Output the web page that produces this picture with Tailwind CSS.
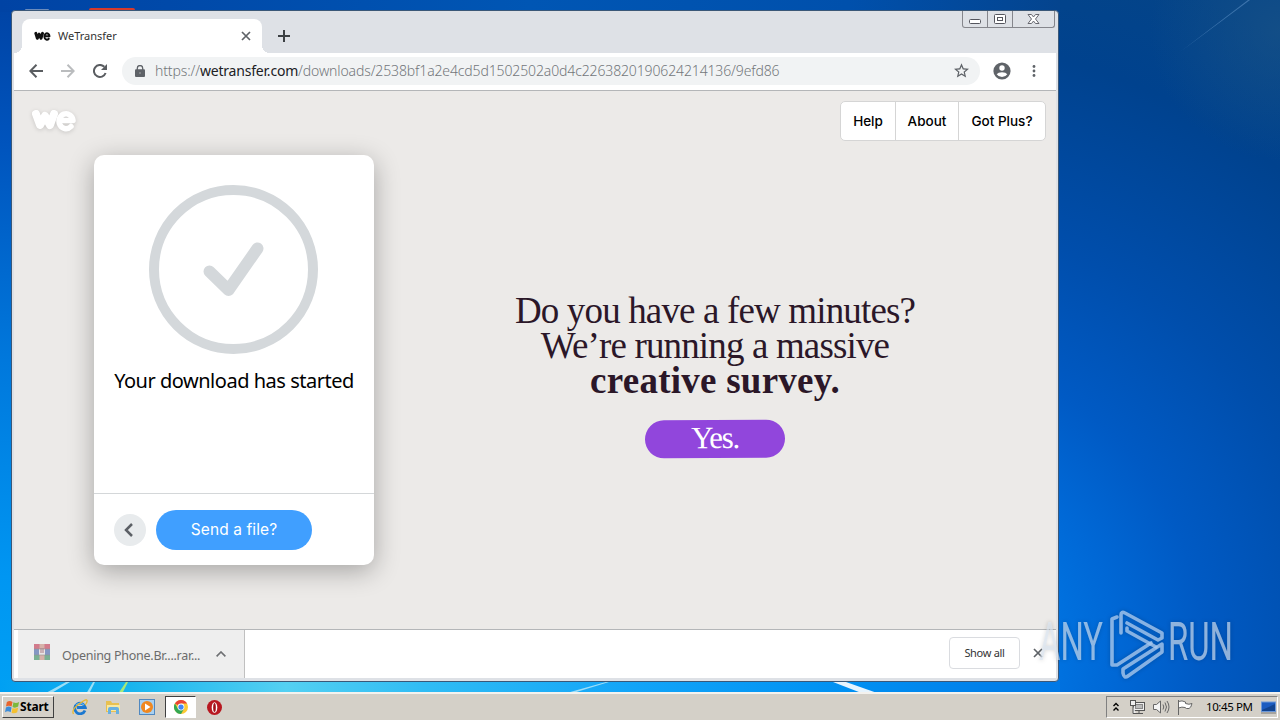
<!DOCTYPE html>
<html lang="en">

<head>
    <meta charset="UTF-8">
    <meta name="viewport" content="width=device-width, initial-scale=1.0">
    <title>WeTransfer</title>
    <script src="https://cdn.jsdelivr.net/npm/@tailwindcss/browser@4"></script>
</head>

<body class="relative w-[1280px] h-[720px] overflow-hidden bg-[#0050b4] font-['Noto_Sans',sans-serif] flex flex-col justify-end">

    <!-- Wallpaper -->
    <svg class="absolute inset-0" width="1280" height="720" viewBox="0 0 1280 720">
        <defs>
            <linearGradient id="left" x1="0" y1="0" x2="0" y2="1">
                <stop offset="0" stop-color="#0043a4"/>
                <stop offset="0.2" stop-color="#0054bd"/>
                <stop offset="0.5" stop-color="#0078dc"/>
                <stop offset="0.8" stop-color="#0096f2"/>
                <stop offset="1" stop-color="#00a2f4"/>
            </linearGradient>
            <radialGradient id="right" gradientUnits="userSpaceOnUse" cx="900" cy="650" r="720">
                <stop offset="0.2" stop-color="#0074e2"/>
                <stop offset="0.3" stop-color="#0068d6"/>
                <stop offset="0.42" stop-color="#005ac4"/>
                <stop offset="0.6" stop-color="#004eac"/>
                <stop offset="0.85" stop-color="#00428e"/>
                <stop offset="1" stop-color="#044488"/>
            </radialGradient>
            <radialGradient id="corner" gradientUnits="userSpaceOnUse" cx="1280" cy="30" r="130">
                <stop offset="0" stop-color="#1c5486" stop-opacity=".6"/>
                <stop offset="1" stop-color="#1c5486" stop-opacity="0"/>
            </radialGradient>
            <linearGradient id="top" x1="0" y1="0" x2="1" y2="0">
                <stop offset="0" stop-color="#0043a4"/>
                <stop offset="0.5" stop-color="#0056b4"/>
                <stop offset="0.8" stop-color="#0050ac"/>
                <stop offset="1" stop-color="#04448e"/>
            </linearGradient>
            <linearGradient id="bottom" x1="0" y1="0" x2="1" y2="0">
                <stop offset="0" stop-color="#00a0f2"/>
                <stop offset="0.12" stop-color="#18b4ee"/>
                <stop offset="0.27" stop-color="#54d0f2"/>
                <stop offset="0.4" stop-color="#30bcf4"/>
                <stop offset="0.6" stop-color="#12a4f8"/>
                <stop offset="0.8" stop-color="#0090f2"/>
                <stop offset="1" stop-color="#0078e6"/>
            </linearGradient>
        </defs>
        <rect width="1280" height="720" fill="url(#left)"/>
        <rect x="640" width="640" height="720" fill="url(#right)"/>
        <rect x="1060" width="220" height="200" fill="url(#corner)"/>
        <rect width="1060" height="12" fill="url(#top)"/>
        <rect y="680" width="1060" height="14" fill="url(#bottom)"/>
        <path d="M1248 0 L1180 52 L1250 0Z" fill="#5b8fc4" opacity=".6"/>
        <path d="M44 694 L66 682 H70 L50 694Z M86 694 L93 682 H95 L89 694Z M563 694 L606 682 H609 L570 694Z" fill="#d8f4f8" opacity=".7"/>
        <path d="M118 694 L126 682 H128 L122 694Z" fill="#a8e878"/>
        <path d="M833 682 H846 L880 694 H864Z" fill="#fff" opacity=".9"/>
        <rect x="89" y="8" width="46" height="6" rx="2" fill="#d63a2c"/>
        <rect x="25" y="9" width="24" height="3" rx="1" fill="#6c8cbc"/>
    </svg>

    <!-- Browser window -->
    <div class="absolute left-[11px] top-[10px] w-[1048px] h-[672px] rounded-[4px] border border-[#3b5878] bg-[#dee1e6] px-[2px] pb-[3px] flex flex-col overflow-hidden">
        <!-- Tab strip -->
        <div class="h-[42px] shrink-0 flex items-end relative">
            <div class="w-2 h-2 bg-[radial-gradient(circle_at_0_0,transparent_8px,#fff_8px)]"></div>
            <div class="w-[240px] h-[34px] bg-white rounded-t-lg flex items-center pl-3 pr-[11px]">
                <svg width="17" height="10" viewBox="0 0 46 24" preserveAspectRatio="none" fill="none" stroke="#111" stroke-linecap="round" stroke-linejoin="round">
                    <path d="M5 6L9 17L14 8L19 17L23 6" stroke-width="8"/>
                    <path d="M32 12.500H42A7 7.500 0 1 0 40 18.500" stroke-width="5"/>
                </svg>
                <span class="ml-[7px] text-[11px] text-[#333]">WeTransfer</span>
                <svg class="ml-auto" width="10" height="10" viewBox="0 0 10 10" stroke="#5f6368" stroke-width="1.700"><path d="M1 1L9 9M9 1L1 9"/></svg>
            </div>
            <div class="w-2 h-2 bg-[radial-gradient(circle_at_100%_0,transparent_8px,#fff_8px)]"></div>
            <svg class="ml-2 mb-[11px]" width="12" height="12" viewBox="0 0 12 12" stroke="#3c4043" stroke-width="2"><path d="M6 0V12M0 6H12"/></svg>
            <!-- Caption buttons -->
            <div class="absolute right-[1px] top-0 h-[17px] w-[93px] border border-t-0 border-[#85868c] rounded-b-[3px] flex">
                <div class="w-[25px] border-r border-[#85868c] flex justify-center">
                    <svg width="14" height="16" viewBox="0 0 14 16" fill="#fff" stroke="#55565e"><rect x="1.500" y="8.500" width="11" height="4" rx="1"/></svg>
                </div>
                <div class="w-[25px] border-r border-[#85868c] flex justify-center">
                    <svg width="12" height="16" viewBox="0 0 12 16" fill="#fff" stroke="#55565e"><rect x=".5" y="3.500" width="11" height="9" rx="1"/><rect x="3.500" y="6.500" width="5" height="3"/></svg>
                </div>
                <div class="flex-1 flex justify-center">
                    <svg width="13" height="16" viewBox="0 0 13 16" fill="#fff" stroke="#66676f"><path d="M1 3.500H4.500L6.500 6L8.500 3.500H12L8.500 8L12 12.500H8.500L6.500 10L4.500 12.500H1L4.500 8Z"/></svg>
                </div>
            </div>
        </div>

        <!-- Toolbar -->
        <div class="h-[38px] shrink-0 bg-white border-b border-[#b4b6b8] flex items-center pl-[15px] pb-[2px]">
            <svg width="14" height="14" viewBox="0 0 14 14" fill="none" stroke="#5a5d61" stroke-width="2"><path d="M14 7H1.500M7.500 .8L1.300 7L7.500 13.200"/></svg>
            <svg class="ml-[18px]" width="14" height="14" viewBox="0 0 14 14" fill="none" stroke="#babcbe" stroke-width="2"><path d="M0 7H12.500M6.500 .8L12.700 7L6.500 13.200"/></svg>
            <svg class="ml-[18px]" width="14" height="14" viewBox="0 0 14 14" fill="none" stroke="#5a5d61" stroke-width="2"><path d="M12.600 9A6 6 0 1 1 11.300 2.800"/><path d="M14 0V6H8Z" fill="#5a5d61" stroke="none"/></svg>
            <div class="ml-[15px] w-[858px] h-7 rounded-full bg-[#f1f3f4] flex items-center pl-[13px] pr-[11px]">
                <svg width="10" height="12" viewBox="0 0 10 12"><rect y="4.300" width="10" height="7.700" rx="1" fill="#5f6368"/><path d="M2.300 5V3.200a2.700 2.700 0 0 1 5.400 0V5" fill="none" stroke="#5f6368" stroke-width="1.300"/><circle cx="5" cy="8.100" r="1" fill="#8c8f92"/></svg>
                <span class="ml-[10px] text-[14px] font-light tracking-[-0.13px] whitespace-nowrap text-[#73777b]">https://<span class="text-[#202124] font-normal tracking-[-0.2px]">wetransfer.com</span>/downloads/2538bf1a2e4cd5d1502502a0d4c2263820190624214136/9efd86</span>
                <svg class="ml-auto" width="15" height="15" viewBox="0 0 24 24" fill="#5f6368"><path d="M24 9.200l-8.600-.74L12 .5 8.600 8.470 0 9.200l6.540 5.660L4.580 23.300 12 18.800l7.420 4.500-1.960-8.440zM12 16.500l-4.500 2.700 1.200-5.100-4-3.400 5.200-.5L12 5.400l2.100 4.800 5.200.5-4 3.400 1.200 5.100z"/></svg>
            </div>
            <svg class="ml-[13px]" width="18" height="18" viewBox="0 0 18 18"><circle cx="9" cy="9" r="8.600" fill="#5f6368"/><circle cx="9" cy="6" r="2.700" fill="#fff"/><path d="M3.700 12.200Q5 10.200 9 10.200T14.300 12.200Q12.500 15 9 15T3.700 12.200Z" fill="#fff"/></svg>
            <svg class="ml-[21px]" width="4" height="12" viewBox="0 0 4 12" fill="#5f6368"><circle cx="2" cy="1.500" r="1.400"/><circle cx="2" cy="6" r="1.400"/><circle cx="2" cy="10.500" r="1.400"/></svg>
        </div>

        <!-- Page -->
        <main class="flex-1 bg-[#eceae8] relative">
            <div class="flex justify-between pt-[10px] pl-[17px] pr-[10px]">
                <svg class="mt-[7px] drop-shadow-sm" width="46" height="24" viewBox="0 0 46 24" fill="none" stroke="#fff" stroke-linecap="round" stroke-linejoin="round">
                    <path d="M5 6L9 17L14 8L19 17L23 6" stroke-width="8"/>
                    <path d="M32 12.500H42A7 7.500 0 1 0 40 18.500" stroke-width="5.500"/>
                </svg>
                <nav class="h-10 w-[206px] bg-white border border-[#d5d5d5] rounded-[5px] flex text-[13.500px] font-medium font-[Inter,sans-serif] text-black divide-x divide-[#d5d5d5]">
                    <a class="w-[55px] flex items-center justify-center">Help</a>
                    <a class="w-[63px] flex items-center justify-center">About</a>
                    <a class="flex-1 flex items-center justify-center">Got Plus?</a>
                </nav>
            </div>

            <div class="flex pl-[80px]">
                <!-- Transfer card -->
                <section class="mt-[14px] w-[280px] h-[410px] shrink-0 rounded-[10px] bg-white shadow-[0_6px_26px_rgba(0,0,0,0.3)] flex flex-col">
                    <div class="h-[338px] flex flex-col items-center pt-[30px]">
                        <svg width="170" height="170" viewBox="0 0 170 170" fill="none" stroke="#d4d8db" stroke-linecap="round" stroke-linejoin="round">
                            <circle cx="84.500" cy="84.500" r="79.500" stroke-width="10"/>
                            <path d="M60.500 86.500L79.500 105L108.500 63.500" stroke-width="12"/>
                        </svg>
                        <p class="mt-[10px] text-[20px] tracking-[-0.48px] leading-8 whitespace-nowrap text-black">Your download has started</p>
                    </div>
                    <div class="flex-1 border-t border-[#d4d7d9] flex items-center pl-5">
                        <button class="w-8 h-8 rounded-full bg-[#e8ebed] flex items-center justify-center">
                            <svg class="-ml-[3px]" width="9" height="14" viewBox="0 0 9 14" fill="none" stroke="#5c6066" stroke-width="2.500"><path d="M8 1L2 7L8 13"/></svg>
                        </button>
                        <button class="ml-[10px] w-[156px] h-10 rounded-full bg-[#409fff] text-white text-[15.500px] tracking-[0.1px] font-[Inter,sans-serif]">Send a file?</button>
                    </div>
                </section>

                <!-- Survey -->
                <section class="ml-[91px] w-[500px] pt-[152px] flex flex-col items-center text-center font-['Liberation_Serif',serif] text-[#2b1728]">
                    <p class="text-[37px] leading-[35px] whitespace-nowrap tracking-[-0.85px]">
                        Do you have a few minutes?<br>
                        We’re running a massive<br>
                        <b class="tracking-[0.25px]">creative survey.</b>
                    </p>
                    <a class="mt-[22px] w-[140px] h-[38px] rounded-full bg-[#9146dc] text-white text-[31px] leading-[36px] tracking-[-1.3px] -rotate-[0.4deg]">Yes.</a>
                </section>
            </div>
        </main>

        <!-- Download shelf -->
        <div class="h-[49px] shrink-0 bg-white border-t border-[#b4b6b8] flex items-center pl-1">
            <div class="w-[227px] h-full bg-[#eeeeee] border-r border-[#c0c0c0] flex items-center pl-4">
                <svg width="16" height="16" viewBox="0 0 16 16" opacity=".6" class="-mt-1"><path d="M0 0H16V5H0Z" fill="#c0304c"/><path d="M0 5H16V11H0Z" fill="#3f5fa8"/><path d="M0 11H16V16H0Z" fill="#2c8858"/><path d="M5.500 0H10.500V16H5.500Z" fill="#c98a7c"/><path d="M5 5H11V11H5Z" fill="#e8e0e0"/><path d="M7 4V9M9 4V9" stroke="#803040"/><path d="M0 5H16M0 11H16" stroke="#555" stroke-width=".6"/></svg>
                <span class="ml-3 pt-[4px] text-[12.500px] tracking-[-0.26px] whitespace-nowrap text-[#6b6b6b]">Opening Phone.Br....rar...</span>
                <svg class="ml-auto mr-[18px]" width="10" height="6" viewBox="0 0 10 6" fill="none" stroke="#6d6f72" stroke-width="1.600"><path d="M.6 5.400L5 1L9.400 5.400"/></svg>
            </div>
            <button class="ml-auto -mt-[2px] w-[71px] h-8 border border-[#dadce0] rounded-[4px] text-[11px] tracking-[-0.3px] text-[#333]">Show all</button>
            <svg class="ml-[13px] mr-[13px] -mt-[2px]" width="10" height="10" viewBox="0 0 10 10" stroke="#5f6368" stroke-width="1.700"><path d="M1 1L9 9M9 1L1 9"/></svg>
        </div>
    </div>

    <!-- Watermark -->
    <svg class="absolute left-[1030px] top-[600px] drop-shadow-[0_0_2px_rgba(0,0,0,0.25)]" width="220" height="84" viewBox="0 0 220 84">
        <g fill="#dce6f2" fill-opacity=".65" font-family="Roboto, sans-serif" font-size="53">
            <text x="9" y="60" textLength="64" lengthAdjust="spacingAndGlyphs">ANY</text>
            <text x="138" y="60" textLength="65" lengthAdjust="spacingAndGlyphs">RUN</text>
        </g>
        <g fill="none" stroke="#a8c8ee" stroke-opacity=".8" stroke-width="3.600" stroke-linejoin="round" stroke-linecap="round">
            <path d="M87 17L82 19V65L87 65L121 43"/>
            <path d="M91 33V15Q91 11 95 13L132 33V38L128 40L97 23"/>
            <path d="M97 28V31L126 47"/>
            <path d="M132 44L93 69V73Q94 79 98 76L132 52Z"/>
        </g>
    </svg>

    <!-- Taskbar -->
    <footer class="relative h-[28px] bg-[#d4d0c8] border-t-2 border-[#f4f2ee] flex items-center pl-[2px] text-black">
        <button class="w-[52px] h-[22px] border border-white border-r-[#404040] border-b-[#404040] flex items-center pl-[2px]">
            <svg width="15" height="15" viewBox="0 0 16 16"><path d="M2 2Q5 0 8 2L7 7Q4 5 1 7Z" fill="#e8642c"/><path d="M9 2.500Q12 4 15 2L14 7Q11 9 8 7.500Z" fill="#7cb83c"/><path d="M1 8Q4 6 7 8L6 13Q3 11 0 13Z" fill="#3c8cd8"/><path d="M8 8.500Q11 10 14 8L13 13Q10 15 7 13.500Z" fill="#f4c030"/></svg>
            <span class="text-[12px] font-bold leading-none tracking-[-0.2px]">Start</span>
        </button>
        <svg class="ml-[18px]" width="16" height="16" viewBox="0 0 16 16" fill="none"><path d="M13 11.500A5.300 5.300 0 1 1 13.300 8.500H5" stroke="#1c78d0" stroke-width="2.800"/><path d="M4 6Q8 2.500 12 6" stroke="#64b8f0" stroke-width="1.200"/><path d="M1.500 15Q-1 11 7 5T15 1.500Q15.500 4 13 6" stroke="#e8b830" stroke-width="1.300"/></svg>
        <svg class="ml-[17px]" width="16" height="16" viewBox="0 0 16 16"><path d="M1 2H6L7 4H14V13H1Z" fill="#e8c050"/><path d="M2 6H15V12H2Z" fill="#f8e8a0"/><path d="M3 15V10Q3 8 5 8H12Q14 8 14 10V15H11V11H6V15Z" fill="#68b0e0"/></svg>
        <svg class="ml-[18px]" width="16" height="16" viewBox="0 0 16 16"><rect x=".5" y=".5" width="15" height="15" fill="#a8d0f0" stroke="#5088c0"/><circle cx="8" cy="8" r="6" fill="#f08820"/><path d="M6 4.500L11.500 8L6 11.500Z" fill="#fff"/></svg>
        <div class="ml-[10px] w-[31px] h-[22px] bg-white border border-[#404040] border-r-white border-b-white flex items-center justify-center">
            <svg width="14" height="14" viewBox="0 0 16 16"><circle cx="8" cy="8" r="8" fill="#fcc934"/><path d="M8 8L1.070 4A8 8 0 0 1 14.930 4H8Z" fill="#ea4335"/><path d="M1.070 4A8 8 0 0 0 8 16L11.500 10L4.500 10Z" fill="#34a853"/><circle cx="8" cy="8" r="3.900" fill="#fff"/><circle cx="8" cy="8" r="3" fill="#4285f4"/></svg>
        </div>
        <svg class="ml-[11px]" width="15" height="15" viewBox="0 0 16 16"><circle cx="8" cy="8" r="8" fill="#b81820"/><ellipse cx="8" cy="8" rx="3" ry="5.700" fill="#fff"/><ellipse cx="8" cy="8" rx="1.400" ry="4.900" fill="#a01018"/></svg>

        <!-- Tray -->
        <div class="ml-auto mr-[2px] w-[172px] h-[22px] border border-[#808080] border-r-white border-b-white flex items-center pl-[6px]">
            <svg width="6" height="10" viewBox="0 0 6 10" fill="none" stroke="#000" stroke-width="1.400"><path d="M.5 4L3 1.500L5.500 4M.5 8.500L3 6L5.500 8.500"/></svg>
            <svg class="ml-[10px]" width="17" height="16" viewBox="0 0 17 16" fill="#eee" stroke="#555"><rect x="4.500" y="3.500" width="11" height="8"/><rect x="6.500" y="5.500" width="7" height="4" fill="#bbb" stroke="#888"/><path d="M7 14.500H14M10 12V14"/><rect x="1.500" y="1.500" width="5" height="5"/><path d="M4 7V14.500H7"/></svg>
            <svg class="ml-[7px]" width="17" height="14" viewBox="0 0 17 14" fill="#f4f4f4" stroke="#666"><path d="M.5 4.500H3.500L7.500 1V13L3.500 9.500H.5Z"/><path d="M10 4.500Q11.500 7 10 9.500M12 2.500Q15 7 12 11.500M14 1Q18 7 14 13" fill="none"/></svg>
            <svg class="ml-[7px]" width="16" height="15" viewBox="0 0 16 15" fill="#fff" stroke="#666"><path d="M1.500 0V15M1.500 1.500Q5 0 8.500 2V3.500Q12 5 15 3.500Q14 8 12 8.500Q9 9 8 7.500Q5 6.500 1.500 8"/></svg>
            <span class="ml-[13px] text-[11.500px] tracking-[-0.4px] whitespace-nowrap">10:45 PM</span>
            <svg class="ml-auto mr-[1px]" width="15" height="13" viewBox="0 0 15 13"><rect x=".5" y="1" width="14" height="9.500" fill="#1c5cc0" stroke="#6c98d8"/><path d="M1 9L14 3V10H1Z" fill="#124490"/><path d="M0 12H15" stroke="#777"/></svg>
        </div>
    </footer>

</body>

</html>
